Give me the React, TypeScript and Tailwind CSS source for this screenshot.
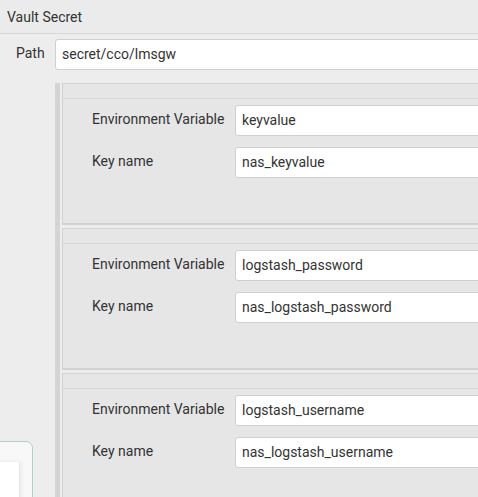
import React from 'react';

interface SecretEntry {
  envVar: string;
  keyName: string;
}

const entries: SecretEntry[] = [
  { envVar: 'keyvalue', keyName: 'nas_keyvalue' },
  { envVar: 'logstash_password', keyName: 'nas_logstash_password' },
  { envVar: 'logstash_username', keyName: 'nas_logstash_username' },
];

const Field: React.FC<{ label: string; value: string }> = ({ label, value }) => (
  <div className="flex items-center">
    <div className="w-[172px] pl-[29px] -mt-[3px] shrink-0 whitespace-nowrap text-[14px] text-[#333]">{label}</div>
    <div className="h-[31px] w-[300px] shrink-0 flex items-center px-[6px] bg-white border border-[#cfcfcf] rounded-[3px] text-[14px] text-[#333]">
      {value}
    </div>
  </div>
);

const SecretPanel: React.FC<{ entry: SecretEntry }> = ({ entry }) => (
  <div className="w-[460px] bg-[#e6e6e6] border border-[#d2d2d2] border-b-2">
    <div className="h-[15px] border-b border-[#d8d8d8]" />
    <div className="pt-[6px] pb-[45px] flex flex-col gap-[11px]">
      <Field label="Environment Variable" value={entry.envVar} />
      <Field label="Key name" value={entry.keyName} />
    </div>
  </div>
);

const App: React.FC = () => {
  return (
    <div
      className="w-[478px] h-[497px] overflow-hidden bg-[#ededed] text-[#333]"
      style={{ fontFamily: 'Roboto, "Liberation Sans", sans-serif' }}
    >
      <div className="h-[34px] border-b border-[#d6d6d6] bg-[#ebebeb] flex items-center px-[7px] pt-[1px] text-[14px]">
        Vault Secret
      </div>

      <div className="mt-[5px] flex items-center">
        <div className="w-[55px] shrink-0 pl-[16px] text-[14px] -mt-[3px]">Path</div>
        <div className="h-[31px] w-[440px] shrink-0 flex items-center px-[6px] bg-white border border-[#cfcfcf] rounded-[3px] text-[14px]">
          secret/cco/lmsgw
        </div>
      </div>

      <div className="mt-[13px] flex h-[420px]">
        <div className="w-[55px] shrink-0 flex flex-col">
          <div className="mt-[358px] -ml-[10px] w-[43px] h-[80px] rounded-[7px] border border-[#a9d3c6] bg-[#f8f8f8] pt-[20px]">
            <div className="w-[28px] h-[60px] bg-white shadow-[2px_0_4px_rgba(0,0,0,0.08)]" />
          </div>
        </div>
        <div className="w-[5px] shrink-0 bg-[#d4d4d4]" />
        <div className="ml-[2px] flex flex-col gap-[3px]">
          {entries.map((entry) => (
            <SecretPanel key={entry.envVar} entry={entry} />
          ))}
        </div>
      </div>
    </div>
  );
};

export default App;
